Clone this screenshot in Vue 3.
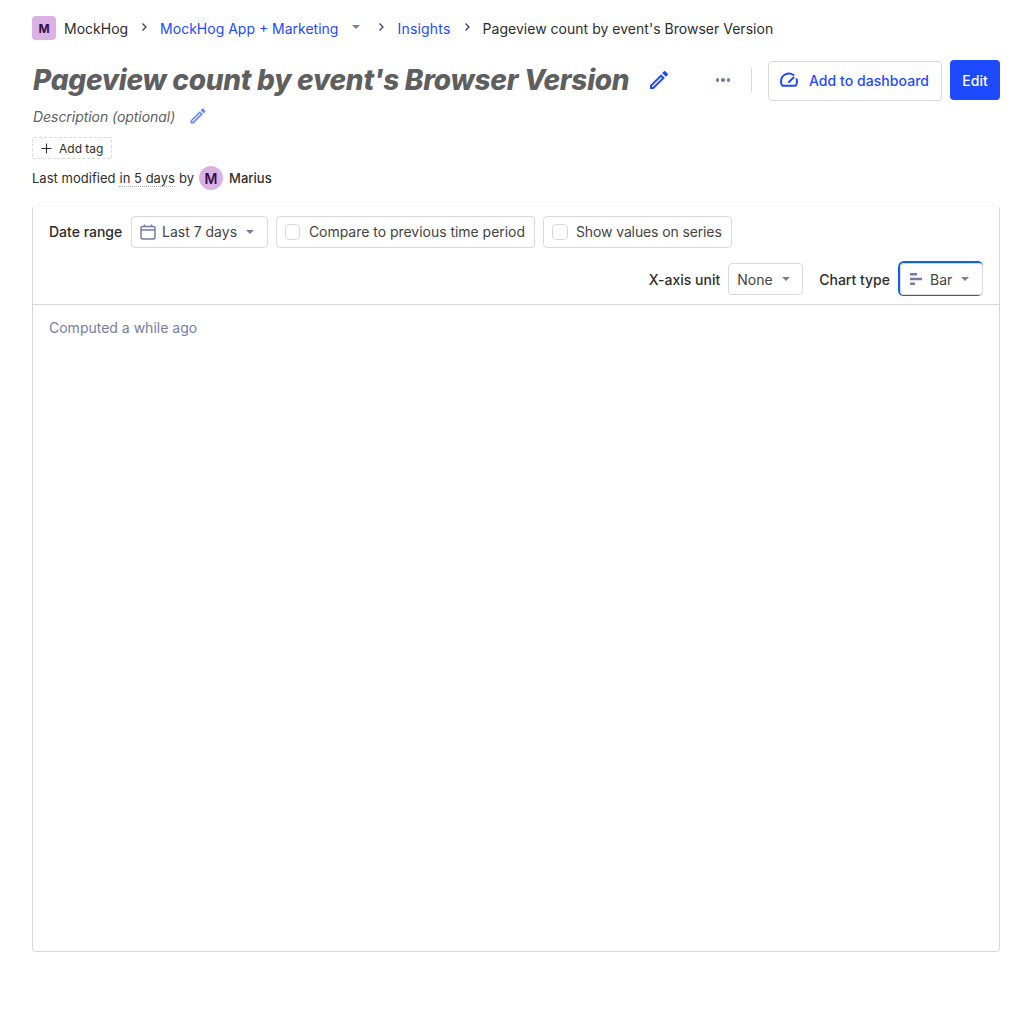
<template>
  <div class="page">
    <nav class="crumbs">
      <span class="org-badge">M</span>
      <span class="crumb-org">MockHog</span>
      <svg class="sep" viewBox="0 0 8 10"><path d="M2.5 1.5 6 5 2.5 8.5" /></svg>
      <a class="crumb-link">MockHog App + Marketing</a>
      <span class="caret project-caret"></span>
      <svg class="sep" viewBox="0 0 8 10"><path d="M2.5 1.5 6 5 2.5 8.5" /></svg>
      <a class="crumb-link insights">Insights</a>
      <svg class="sep" viewBox="0 0 8 10"><path d="M2.5 1.5 6 5 2.5 8.5" /></svg>
      <span class="crumb-current">Pageview count by event's Browser Version</span>
    </nav>

    <header class="title-row">
      <h1>Pageview count by event's Browser Version</h1>
      <svg class="pencil" viewBox="0 0 24 24"><path d="M3 17.25V21h3.75L17.81 9.94l-3.75-3.75L3 17.25zM5.92 19H5v-.92l9.06-9.06.92.92L5.92 19zM20.71 7.04a1 1 0 0 0 0-1.41l-2.34-2.34a1 1 0 0 0-1.41 0l-1.83 1.83 3.75 3.75 1.83-1.83z" /></svg>
      <div class="actions">
        <span class="more"><i></i><i></i><i></i></span>
        <span class="divider"></span>
        <button class="btn-outline" type="button">
          <svg class="gauge" viewBox="0 0 20 20"><path d="M14.6 4A8 8 0 0 0 2 10.5c0 1.6.5 3 1.3 4.2h13.4c.8-1.2 1.3-2.6 1.3-4.2 0-.9-.1-1.6-.4-2.3" /><path d="m10 11 4.5-4.5" /></svg>
          Add to dashboard
        </button>
        <button class="btn-primary" type="button">Edit</button>
      </div>
    </header>

    <div class="desc-row">
      <span class="desc">Description (optional)</span>
      <svg class="pencil small" viewBox="0 0 24 24"><path d="M3 17.25V21h3.75L17.81 9.94l-3.75-3.75L3 17.25zM5.92 19H5v-.92l9.06-9.06.92.92L5.92 19zM20.71 7.04a1 1 0 0 0 0-1.41l-2.34-2.34a1 1 0 0 0-1.41 0l-1.83 1.83 3.75 3.75 1.83-1.83z" /></svg>
    </div>

    <div class="tag">
      <svg class="plus" viewBox="0 0 11 11"><path d="M5.5 .5v10M.5 5.5h10" /></svg>
      Add tag
    </div>

    <div class="modified">
      Last modified <span class="when">in 5 days</span> by
      <span class="avatar">M</span>
      <span class="author">Marius</span>
    </div>

    <section class="card">
      <div class="controls">
        <div class="control-line first">
          <span class="label date-label">Date range</span>
          <div class="box date">
            <svg class="calendar" viewBox="0 0 16 16"><rect x="1" y="2.5" width="14" height="12.5" rx="1.5" /><path d="M1 6h14M4.5 .5v2.5M11.5 .5v2.5" /></svg>
            Last 7 days
            <span class="caret"></span>
          </div>
          <label class="box check compare"><span class="tick"></span>Compare to previous time period</label>
          <label class="box check series"><span class="tick"></span>Show values on series</label>
        </div>
        <div class="control-line right">
          <span class="label">X-axis unit</span>
          <div class="box select none">None<span class="caret"></span></div>
          <span class="label chart-label">Chart type</span>
          <div class="box select focused">
            <svg class="bars" viewBox="0 0 12 12"><rect y="0" width="7" height="2.5" /><rect y="4.75" width="12" height="2.5" /><rect y="9.5" width="5" height="2.5" /></svg>
            Bar
            <span class="caret"></span>
          </div>
        </div>
      </div>
      <div class="card-body">Computed a while ago</div>
    </section>
  </div>
</template>

<script setup>
</script>

<style>
body {
  background: #ffffff;
}
</style>

<style scoped>
.page {
  box-sizing: border-box;
  width: 1032px;
  height: 1031px;
  padding: 16px 32px 0;
  color: #2d2d2d;
  font-family: Inter, "Liberation Sans", sans-serif;
  font-size: 14px;
}

.crumbs {
  display: flex;
  align-items: center;
  height: 24px;
}

.org-badge {
  display: flex;
  align-items: center;
  justify-content: center;
  width: 24px;
  height: 24px;
  border-radius: 4px;
  background: #dcb1e3;
  color: #35104c;
  font-size: 12px;
  font-weight: 700;
}

.crumb-org {
  margin-left: 8px;
}

.sep {
  width: 8px;
  height: 10px;
  margin: -2px 12px 0;
  fill: none;
  stroke: #35416b;
  stroke-width: 1.3;
}

.crumb-link {
  color: #1d4aff;
}

.crumb-link.insights {
  letter-spacing: 0.2px;
}

.crumb-current {
  color: #2d2d2d;
  letter-spacing: 0.02px;
}

.caret {
  display: inline-block;
  width: 0;
  height: 0;
  margin-left: 8px;
  border-top: 4px solid #747ea1;
  border-left: 4.5px solid transparent;
  border-right: 4.5px solid transparent;
}

.project-caret {
  margin: -3px 5px 0 14px;
}

.title-row {
  display: flex;
  align-items: center;
  height: 40px;
  margin-top: 20px;
}

h1 {
  margin: 0 0 0 1px;
  color: #5f5f5f;
  font-size: 28px;
  font-style: italic;
  font-weight: 800;
  letter-spacing: -0.27px;
  line-height: 40px;
  white-space: nowrap;
}

.pencil {
  width: 24px;
  height: 24px;
  margin-left: 18px;
  fill: #1d4aff;
}

.actions {
  display: flex;
  align-items: center;
  margin-left: auto;
}

.more {
  display: flex;
  gap: 2px;
  margin-right: 21px;
}

.more i {
  width: 3.5px;
  height: 3.5px;
  border-radius: 50%;
  background: #747ea1;
}

.divider {
  width: 1px;
  height: 24px;
  margin-right: 16px;
  background: #d9d9d9;
}

.btn-outline,
.btn-primary {
  box-sizing: border-box;
  display: flex;
  align-items: center;
  height: 40px;
  border-radius: 4px;
  font-family: inherit;
  font-size: 14px;
  font-weight: 500;
  white-space: nowrap;
}

.btn-outline {
  gap: 10px;
  width: 174px;
  margin-top: 1px;
  padding: 0 10px;
  border: 1px solid #d9d9d9;
  background: #ffffff;
  color: #1d4aff;
  letter-spacing: 0.05px;
}

.btn-primary {
  justify-content: center;
  width: 50px;
  margin-left: 8px;
  border: 0;
  background: #1d4aff;
  color: #ffffff;
}

.gauge {
  width: 20px;
  height: 20px;
  fill: none;
  stroke: #1d4aff;
  stroke-width: 2;
  stroke-linecap: round;
  stroke-linejoin: round;
}

.desc-row {
  display: flex;
  align-items: center;
  height: 24px;
  margin-top: 4px;
  padding-left: 1px;
  color: #5f5f5f;
  font-style: italic;
}

.desc {
  letter-spacing: -0.05px;
}

.pencil.small {
  width: 20px;
  height: 20px;
  margin-left: 13px;
  fill: #6c88ff;
}

.tag {
  box-sizing: border-box;
  display: flex;
  align-items: center;
  width: 80px;
  height: 22px;
  margin-top: 9px;
  padding-left: 8px;
  border: 1px dashed #d9d9d9;
  border-radius: 2px;
  font-size: 12px;
}

.plus {
  width: 11px;
  height: 11px;
  margin-right: 7px;
  fill: none;
  stroke: #2d2d2d;
  stroke-width: 1.1;
}

.modified {
  display: flex;
  align-items: center;
  gap: 4px;
  height: 24px;
  margin-top: 7px;
  font-size: 13px;
  letter-spacing: 0.02px;
}

.when {
  border-bottom: 1px dotted #a8a8a8;
}

.avatar {
  display: flex;
  align-items: center;
  justify-content: center;
  width: 24px;
  height: 24px;
  margin-left: 1px;
  border-radius: 50%;
  background: #dcb1e3;
  color: #35104c;
  font-size: 14px;
  font-weight: 600;
}

.author {
  margin-left: 2px;
  font-weight: 500;
}

.card {
  box-sizing: border-box;
  height: 746px;
  margin-top: 16px;
  border: 1px solid #d9d9d9;
  border-top-color: #f7f7f7;
  border-radius: 4px;
}

.controls {
  box-sizing: border-box;
  height: 98px;
  padding: 9px 16px 0;
  border-bottom: 1px solid #d9d9d9;
}

.control-line {
  display: flex;
  align-items: center;
  gap: 8px;
  height: 32px;
}

.control-line.right {
  justify-content: flex-end;
  margin-top: 15px;
}

.label {
  font-weight: 500;
}

.date-label {
  width: 74px;
  padding-bottom: 1px;
}

.chart-label {
  margin-left: 8px;
}

.box {
  box-sizing: border-box;
  display: flex;
  align-items: center;
  height: 32px;
  padding: 0 9px 0 8px;
  border: 1px solid #d9d9d9;
  border-radius: 4px;
  color: #444444;
  white-space: nowrap;
}

.first .box {
  padding-bottom: 1px;
}

.date {
  width: 137px;
}

.calendar {
  width: 16px;
  height: 16px;
  margin-right: 6px;
  fill: none;
  stroke: #747ea1;
  stroke-width: 1.5;
}

.box .caret {
  margin-left: 9px;
  margin-right: 3px;
}

.compare {
  width: 259px;
  letter-spacing: -0.03px;
}

.compare .tick {
  margin-right: 9px;
}

.series {
  width: 189px;
  letter-spacing: -0.12px;
}

.tick {
  box-sizing: border-box;
  width: 16px;
  height: 16px;
  margin-right: 8px;
  border: 1px solid #d9d9d9;
  border-radius: 4px;
}

.none {
  width: 75px;
}

.focused {
  width: 83px;
  margin-left: 2px;
  padding-left: 9px;
  box-shadow: 0 0 0 2px #0f62e0;
  clip-path: inset(-2px 0 -1px -2px round 5px);
}

.bars {
  width: 12px;
  height: 12px;
  margin-right: 8px;
  fill: #747ea1;
}

.card-body {
  padding: 14px 16px;
  color: #747ea1;
}
</style>
